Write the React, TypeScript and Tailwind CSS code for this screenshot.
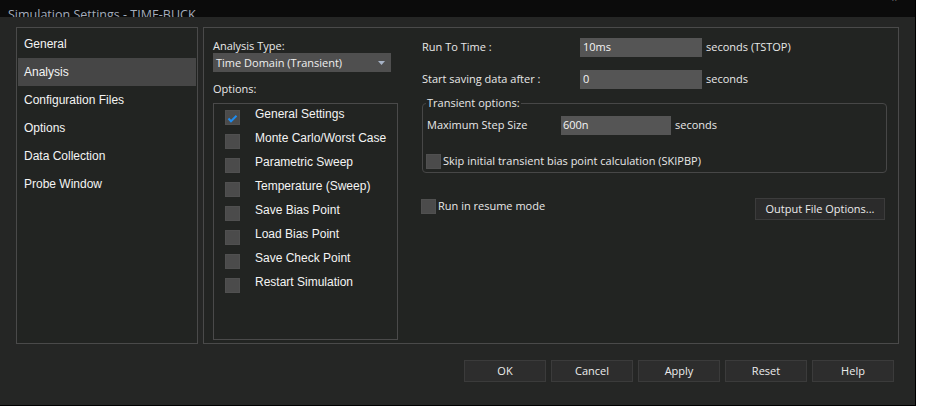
import React from "react";

const seg = { fontFamily: '"Open Sans", "Noto Sans", sans-serif' };
const ari = { fontFamily: '"Liberation Sans", Arial, sans-serif' };

function Check({ checked }: { checked?: boolean }) {
  return (
    <div className="w-[15px] h-[15px] bg-[#4b4b4b] border border-[#505050] shrink-0 relative">
      {checked && (
        <svg width="15" height="15" viewBox="0 0 15 15" className="absolute -left-px -top-px">
          <path d="M3.5 8.5 L6 11.2 L11.5 5.8" fill="none" stroke="#1e8cf0" strokeWidth="2" />
        </svg>
      )}
    </div>
  );
}

const navItems = ["General", "Analysis", "Configuration Files", "Options", "Data Collection", "Probe Window"];
const opts = [
  "General Settings",
  "Monte Carlo/Worst Case",
  "Parametric Sweep",
  "Temperature (Sweep)",
  "Save Bias Point",
  "Load Bias Point",
  "Save Check Point",
  "Restart Simulation",
];

export default function App() {
  return (
    <div className="w-[927px] h-[416px] bg-white overflow-hidden">
      <div className="w-[916px] h-[406px] flex flex-col bg-[#252625] border-r border-b border-black">
        <div className="h-[17px] bg-[#0b0b0b] flex items-end pl-[8px] overflow-hidden relative shrink-0">
          <span className="text-[12.5px] leading-[16px] text-[#a3abbb] -mb-[6px]" style={seg}>
            Simulation Settings - TIME-BUCK
          </span>
          <span className="absolute right-[18px] top-[-7px] text-[#bbbbbb] text-[9px] leading-[12px]" style={seg}>
            ×
          </span>
        </div>
        <div className="flex-1 flex flex-col">
          <div className="flex pl-[16px] pt-[10px] gap-[5px]">
            {/* left nav */}
            <div className="w-[182px] h-[317px] border border-[#4a4a4a] bg-[#222422] px-px pt-[2px] flex flex-col">
              {navItems.map((n) => (
                <div
                  key={n}
                  className={`h-[28px] flex items-center pl-[6px] text-[12px] text-[#f4f4f4] ${
                    n === "Analysis" ? "bg-[#464646]" : ""
                  }`}
                  style={ari}
                >
                  {n}
                </div>
              ))}
            </div>
            {/* right panel */}
            <div className="w-[696px] h-[317px] border border-[#4a4a4a] bg-[#222422] flex pl-[9px]">
              <div className="w-[185px] flex flex-col pt-[10px]">
                <div className="text-[11px] leading-[16px] text-[#e8e8e8]" style={seg}>
                  Analysis Type:
                </div>
                <div className="mt-[-1px] h-[19px] w-[178px] bg-[#4f4f4f] flex items-center justify-between pl-[3px] pr-[6px]">
                  <span className="text-[11px] leading-[16px] text-[#f0f0f0]" style={seg}>
                    Time Domain (Transient)
                  </span>
                  <svg width="7" height="4" viewBox="0 0 7 4">
                    <path d="M0 0 L7 0 L3.5 4 Z" fill="#a7b3c6" />
                  </svg>
                </div>
                <div className="mt-[9px] text-[11px] leading-[16px] text-[#e8e8e8]" style={seg}>
                  Options:
                </div>
                <div className="mt-[6px] h-[237px] border border-[#4a4a4a] flex flex-col">
                  {opts.map((o, i) => (
                    <div key={o} className="h-[24px] flex items-start pl-[11px] shrink-0">
                      <div className="mt-[6px]">
                        <Check checked={i === 0} />
                      </div>
                      <span className="ml-[15px] mt-[3px] text-[12px] leading-[14px] text-[#f4f4f4]" style={ari}>
                        {o}
                      </span>
                    </div>
                  ))}
                </div>
              </div>
              <div className="ml-[24px] w-[465px] flex flex-col pt-[10px] text-[11px] text-[#e8e8e8]" style={seg}>
                <div className="flex items-center h-[19px]">
                  <span className="w-[158px]">Run To Time :</span>
                  <div className="w-[122px] h-[19px] bg-[#555555] flex items-center pl-[3px] text-[#f4f4f4]">10ms</div>
                  <span className="ml-[4px]">seconds (TSTOP)</span>
                </div>
                <div className="flex items-center h-[19px] mt-[13px]">
                  <span className="w-[158px]">Start saving data after :</span>
                  <div className="w-[122px] h-[19px] bg-[#555555] flex items-center pl-[3px] text-[#f4f4f4]">0</div>
                  <span className="ml-[4px]">seconds</span>
                </div>
                <div className="mt-[14px] relative h-[70px] border border-[#474747] rounded-[4px]">
                  <span className="absolute left-[3px] top-[-9px] px-[1px] bg-[#222422] leading-[16px]">
                    Transient options:
                  </span>
                  <div className="flex items-center h-[19px] mt-[12px] pl-[4px]">
                    <span className="w-[134px]">Maximum Step Size</span>
                    <div className="w-[110px] h-[19px] bg-[#555555] flex items-center pl-[2px] text-[#f4f4f4]">600n</div>
                    <span className="ml-[4px]">seconds</span>
                  </div>
                  <div className="flex items-center mt-[18px] pl-[3px]">
                    <Check />
                    <span className="ml-[2px]">Skip initial transient bias point calculation (SKIPBP)</span>
                  </div>
                </div>
                <div className="flex items-start justify-between mt-[25px] pr-[2px]">
                  <div className="flex items-center -ml-px">
                    <Check />
                    <span className="ml-[2px]">Run in resume mode</span>
                  </div>
                  <div className="w-[130px] h-[22px] bg-[#2b2b2b] border border-[#3c3c3c] flex items-center justify-center text-[#ececec]">
                    Output File Options...
                  </div>
                </div>
              </div>
            </div>
          </div>
          <div className="flex justify-end gap-[5px] pr-[21px] mt-[16px]">
            {["OK", "Cancel", "Apply", "Reset", "Help"].map((b) => (
              <div
                key={b}
                className="w-[82px] h-[22px] bg-[#2d2d2d] border border-[#3b3b3b] flex items-center justify-center text-[11px] text-[#ececec]"
                style={seg}
              >
                {b}
              </div>
            ))}
          </div>
        </div>
      </div>
    </div>
  );
}
